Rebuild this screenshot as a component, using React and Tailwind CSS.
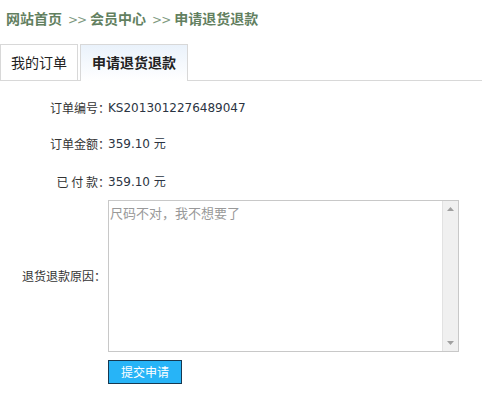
import React from "react";

const cjk = "font-['DejaVu_Sans','Noto_Sans_CJK_SC',sans-serif]";

function Row({ label, children, className = "" }) {
  return (
    <div className={`flex items-center ${className}`}>
      <div className="w-[110px] shrink-0 text-right text-[12px] leading-[18px] text-[#333] font-['Noto_Sans_CJK_SC',sans-serif]">
        {label}
      </div>
      <div className={`-ml-[2px] text-[12px] leading-[18px] text-[#2b3442] ${cjk}`}>{children}</div>
    </div>
  );
}

function Sep() {
  return (
    <span className="font-['DejaVu_Sans',sans-serif] font-normal text-[12px] tracking-[-1px] ml-[6px] mr-[4px] text-[#7f9a7f]">
      &gt;&gt;
    </span>
  );
}

export default function App() {
  return (
    <div className="w-[482px] h-[405px] bg-white overflow-hidden">
      <div className="pt-[8px] pl-[6px] h-[28px] text-[14px] leading-[20px] font-bold text-[#62805f] font-['Noto_Sans_CJK_SC',sans-serif] whitespace-nowrap">
        网站首页<Sep />会员中心<Sep />申请退货退款
      </div>

      <div className="mt-[16px] flex items-end gap-[2px] border-b border-[#d8d8d8] h-[37px] w-[482px]">
        <div className="h-[36px] w-[78px] border-t border-l border-r border-[#d8d8d8] bg-white flex items-center pl-[10px] text-[14px] text-[#222] font-['Noto_Sans_CJK_SC',sans-serif]">
          我的订单
        </div>
        <div className="h-[37px] -mb-px w-[108px] border-t border-l border-r border-[#d8d8d8] bg-gradient-to-b from-[#eaf2fb] to-white flex items-center pl-[11px] pb-px text-[14px] font-bold text-[#222] font-['Noto_Sans_CJK_SC',sans-serif]">
          申请退货退款
        </div>
      </div>

      <div className="pt-[18px]">
        <Row label="订单编号：">KS2013012276489047</Row>
        <Row label="订单金额：" className="mt-[18px]">359.10 元</Row>
        <Row label="已 付 款：" className="mt-[20px]">359.10 元</Row>
        <div className="flex items-center mt-[9px]">
          <div className="w-[108px] shrink-0 text-right text-[12px] leading-[18px] text-[#333] font-['Noto_Sans_CJK_SC',sans-serif] pr-[2px]">
            退货退款原因：
          </div>
          <div className="flex w-[351px] h-[152px] border border-[#c8c8c8] bg-white">
            <textarea
              className="flex-1 resize-none outline-none border-0 px-[1px] py-[3px] text-[13px] leading-[18px] text-[#999] placeholder:text-[#999] font-['Noto_Sans_CJK_SC',sans-serif] overflow-hidden"
              placeholder="尺码不对，我不想要了"
            />
            <div className="w-[16px] h-full bg-[#f0f0f0] border-l border-[#e2e2e2] flex flex-col justify-between items-center py-[6px]">
              <svg width="7" height="4" viewBox="0 0 7 4"><path d="M3.5 0L7 4H0z" fill="#a0a0a0" /></svg>
              <svg width="7" height="4" viewBox="0 0 7 4"><path d="M0 0H7L3.5 4z" fill="#a0a0a0" /></svg>
            </div>
          </div>
        </div>
        <div className="pl-[108px] mt-[7px]">
          <button className="w-[74px] h-[24px] bg-[#27b4f7] border border-[#173850] text-white text-[12px] leading-[22px] font-['Noto_Sans_CJK_SC',sans-serif]">
            提交申请
          </button>
        </div>
      </div>
    </div>
  );
}
